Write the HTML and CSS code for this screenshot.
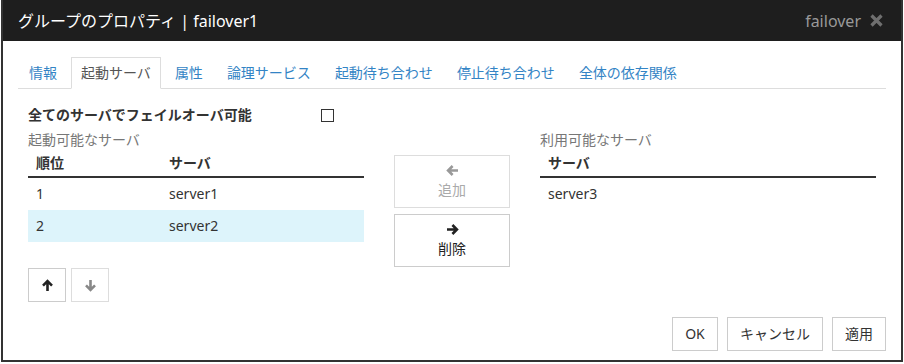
FILE: index.html
```html
<!DOCTYPE html>
<html lang="ja">
<head>
    <meta charset="UTF-8">
    <title>グループのプロパティ</title>
    <link rel="stylesheet" href="styles.css">
</head>
<body>
    <div class="dialog">
        <div class="dialog-header">
            <h4 class="dialog-title">グループのプロパティ | failover1</h4>
            <div class="header-right">
                <span class="group-name">failover</span>
                <svg class="close-icon" width="15" height="15" viewBox="0 0 15 15">
                    <path d="M2.5 2.5L12.5 12.5M12.5 2.5L2.5 12.5" stroke="currentColor" stroke-width="3.2" fill="none"/>
                </svg>
            </div>
        </div>

        <div class="dialog-body">
            <ul class="tabs">
                <li><a>情報</a></li>
                <li class="active"><a>起動サーバ</a></li>
                <li><a>属性</a></li>
                <li><a>論理サービス</a></li>
                <li><a>起動待ち合わせ</a></li>
                <li><a>停止待ち合わせ</a></li>
                <li><a>全体の依存関係</a></li>
            </ul>

            <div class="tab-pane">
                <div class="failover-all">
                    <span class="failover-label">全てのサーバでフェイルオーバ可能</span>
                    <span class="checkbox"></span>
                </div>

                <div class="server-lists">
                    <!-- 起動可能なサーバ -->
                    <div class="list-col">
                        <div class="list-caption">起動可能なサーバ</div>
                        <table class="server-table">
                            <thead>
                                <tr><th class="col-order">順位</th><th>サーバ</th></tr>
                            </thead>
                            <tbody>
                                <tr><td>1</td><td>server1</td></tr>
                                <tr class="selected"><td>2</td><td>server2</td></tr>
                            </tbody>
                        </table>
                        <div class="order-btns">
                            <button class="icon-btn">
                                <svg width="13" height="13" viewBox="0 0 13 13"><path d="M6.5 12V2.5M2 6.6l4.5-4.5 4.5 4.5" stroke="currentColor" stroke-width="2.6" fill="none"/></svg>
                            </button>
                            <button class="icon-btn disabled">
                                <svg width="13" height="13" viewBox="0 0 13 13"><path d="M6.5 1v9.5M2 6.4l4.5 4.5 4.5-4.5" stroke="currentColor" stroke-width="2.6" fill="none"/></svg>
                            </button>
                        </div>
                    </div>

                    <!-- 追加 / 削除 -->
                    <div class="move-col">
                        <button class="move-btn disabled">
                            <svg width="13" height="13" viewBox="0 0 13 13"><path d="M12 6.5H2.5M6.6 2L2.1 6.5l4.5 4.5" stroke="currentColor" stroke-width="2.6" fill="none"/></svg>
                            <span>追加</span>
                        </button>
                        <button class="move-btn">
                            <svg width="13" height="13" viewBox="0 0 13 13"><path d="M1 6.5h9.5M6.4 2l4.5 4.5-4.5 4.5" stroke="currentColor" stroke-width="2.6" fill="none"/></svg>
                            <span>削除</span>
                        </button>
                    </div>

                    <!-- 利用可能なサーバ -->
                    <div class="list-col">
                        <div class="list-caption">利用可能なサーバ</div>
                        <table class="server-table">
                            <thead>
                                <tr><th>サーバ</th></tr>
                            </thead>
                            <tbody>
                                <tr><td>server3</td></tr>
                            </tbody>
                        </table>
                    </div>
                </div>
            </div>
        </div>

        <div class="dialog-footer">
            <button class="btn">OK</button>
            <button class="btn">キャンセル</button>
            <button class="btn">適用</button>
        </div>
    </div>
</body>
</html>
```

FILE: styles.css
```css
* {
    margin: 0;
    padding: 0;
    box-sizing: border-box;
}

body {
    font-family: "Noto Sans", "Noto Sans CJK JP", sans-serif;
    font-size: 14px;
    line-height: 20px;
    color: #333;
    background: #fff;
}

button {
    font: inherit;
    color: inherit;
    background: #fff;
    cursor: pointer;
}

.dialog {
    margin: 0 1px;
    height: 362px;
    border: 2px solid #333;
    border-top: none;
    display: flex;
    flex-direction: column;
}

.dialog-header {
    height: 41px;
    background: #1e1e1e;
    padding: 0 17px 0 15px;
    display: flex;
    align-items: center;
    justify-content: space-between;
}

.dialog-title {
    color: #fff;
    font-size: 16px;
    font-weight: normal;
}

.header-right {
    display: flex;
    align-items: center;
    gap: 8px;
}

.group-name {
    color: #999;
    font-size: 16px;
}

.close-icon {
    color: #6f6f6f;
}

.dialog-body {
    flex: 1;
    padding: 16px 15px 0;
}

/* タブ */
.tabs {
    list-style: none;
    display: flex;
    padding-left: 1px;
    border-bottom: 1px solid #ddd;
}

.tabs li {
    margin-right: 4px;
    margin-bottom: -1px;
}

.tabs a {
    display: block;
    padding: 5px 9px;
    border: 1px solid transparent;
    color: #3384c5;
}

.tabs .active a {
    color: #555;
    background: #fff;
    border-color: #ddd;
    border-bottom-color: #fff;
}

.tab-pane {
    padding: 0 10px;
}

.failover-all {
    margin-top: 16px;
    display: grid;
    grid-template-columns: 293px 13px;
    align-items: center;
}

.failover-label {
    font-weight: bold;
}

.checkbox {
    width: 13px;
    height: 13px;
    border: 1.5px solid #333;
}

.server-lists {
    margin-top: 5px;
    display: flex;
    gap: 30px;
}

.list-col {
    width: 336px;
}

.list-caption {
    color: #777;
}

.server-table {
    width: 100%;
    border-collapse: collapse;
}

.server-table th {
    text-align: left;
    padding: 3px 8px;
    border-bottom: 2px solid #333;
}

.server-table .col-order {
    width: 133px;
}

.server-table td {
    padding: 6px 8px;
}

.server-table .selected td {
    background: #ddf4fb;
}

.order-btns {
    margin-top: 26px;
    display: flex;
    gap: 5px;
}

.icon-btn {
    width: 38px;
    height: 34px;
    border: 1px solid #ccc;
    display: flex;
    align-items: center;
    justify-content: center;
    color: #222;
}

.icon-btn.disabled {
    border-color: #ddd;
    color: #888;
}

.move-col {
    width: 116px;
    padding-top: 25px;
    display: flex;
    flex-direction: column;
    gap: 6px;
}

.move-btn {
    height: 53px;
    border: 1px solid #ccc;
    display: flex;
    flex-direction: column;
    align-items: center;
    justify-content: center;
    gap: 3px;
    color: #222;
}

.move-btn svg {
    margin-top: 1px;
}

.move-btn.disabled {
    border-color: #ddd;
    color: #aaa;
}

.move-btn.disabled svg {
    color: #999;
}

.dialog-footer {
    padding: 0 15px 9px;
    display: flex;
    justify-content: flex-end;
    gap: 9px;
}

.btn {
    height: 34px;
    padding: 0 12px;
    border: 1px solid #ccc;
    min-width: 46px;
}
```
